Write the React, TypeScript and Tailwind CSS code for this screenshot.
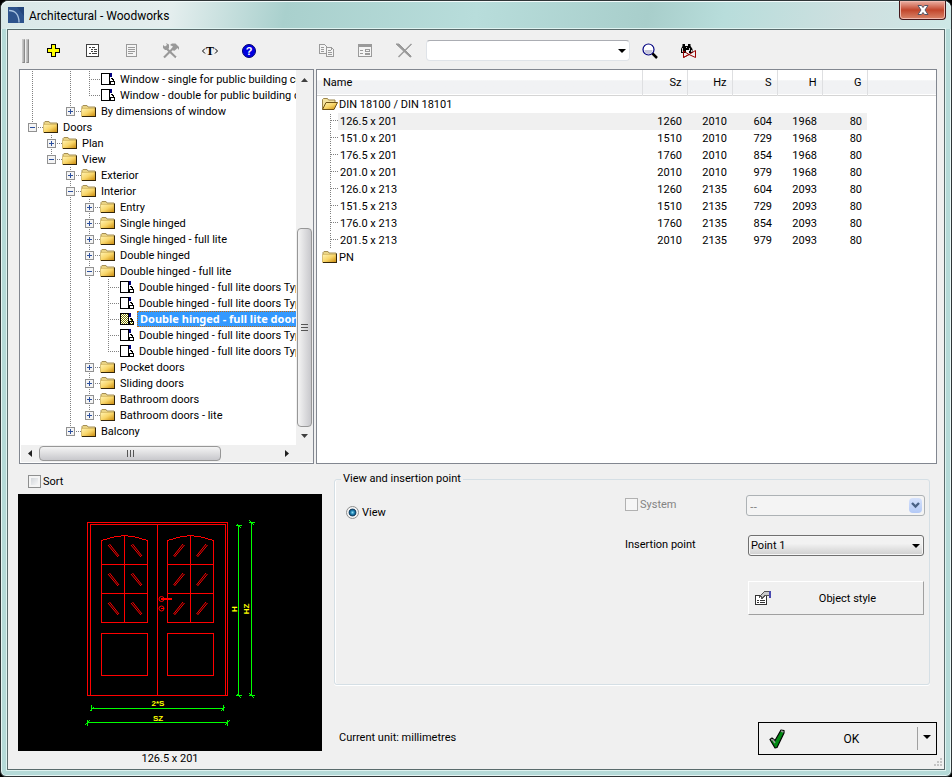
import React, { useState } from "react";

type TreeNode = {
  label: string;
  level: number;
  // columns to the left that carry a vertical guide
  guides?: number[];
  state?: "open" | "closed";
  up?: boolean;
  down?: boolean;
};

const TREE: TreeNode[] = [
  { label: "Window - single for public building co", level: 3, guides: [0, 2], up: true, down: true },
  { label: "Window - double for public building c", level: 3, guides: [0, 2], up: true },
  { label: "By dimensions of window", level: 2, guides: [0], state: "closed", up: true },
  { label: "Doors", level: 0, state: "open", up: true },
  { label: "Plan", level: 1, state: "closed", up: true, down: true },
  { label: "View", level: 1, state: "open", up: true },
  { label: "Exterior", level: 2, state: "closed", up: true, down: true },
  { label: "Interior", level: 2, state: "open", up: true, down: true },
  { label: "Entry", level: 3, guides: [2], state: "closed", up: true, down: true },
  { label: "Single hinged", level: 3, guides: [2], state: "closed", up: true, down: true },
  { label: "Single hinged - full lite", level: 3, guides: [2], state: "closed", up: true, down: true },
  { label: "Double hinged", level: 3, guides: [2], state: "closed", up: true, down: true },
  { label: "Double hinged - full lite", level: 3, guides: [2], state: "open", up: true, down: true },
  { label: "Double hinged - full lite doors Typ", level: 4, guides: [2, 3], up: true, down: true },
  { label: "Double hinged - full lite doors Typ", level: 4, guides: [2, 3], up: true, down: true },
  { label: "Double hinged - full lite door", level: 4, guides: [2, 3], up: true, down: true },
  { label: "Double hinged - full lite doors Typ", level: 4, guides: [2, 3], up: true, down: true },
  { label: "Double hinged - full lite doors Typ", level: 4, guides: [2, 3], up: true },
  { label: "Pocket doors", level: 3, guides: [2], state: "closed", up: true, down: true },
  { label: "Sliding doors", level: 3, guides: [2], state: "closed", up: true, down: true },
  { label: "Bathroom doors", level: 3, guides: [2], state: "closed", up: true, down: true },
  { label: "Bathroom doors - lite", level: 3, guides: [2], state: "closed", up: true },
  { label: "Balcony", level: 2, state: "closed", up: true },
];

const SIZES = [
  ["126.5 x 201", "1260", "2010", "604", "1968", "80"],
  ["151.0 x 201", "1510", "2010", "729", "1968", "80"],
  ["176.5 x 201", "1760", "2010", "854", "1968", "80"],
  ["201.0 x 201", "2010", "2010", "979", "1968", "80"],
  ["126.0 x 213", "1260", "2135", "604", "2093", "80"],
  ["151.5 x 213", "1510", "2135", "729", "2093", "80"],
  ["176.0 x 213", "1760", "2135", "854", "2093", "80"],
  ["201.5 x 213", "2010", "2135", "979", "2093", "80"],
];

const COLUMNS = ["Sz", "Hz", "S", "H", "G"];

/* ICONS */

const FolderIcon = () => (
  <svg width="16" height="14" viewBox="0 0 16 14" className="shrink-0">
    <defs>
      <linearGradient id="folder" x1="0" y1="0" x2="1" y2="1">
        <stop offset="0" stopColor="#fff3b4" />
        <stop offset="0.5" stopColor="#f8d568" />
        <stop offset="1" stopColor="#c88708" />
      </linearGradient>
    </defs>
    <path d="M1 12V2.500L2 1.500h4l1 1.500h7v9z" fill="#e9d385" stroke="#a58f55" />
    <path d="M.5 4.500h13.500v8H.5z" fill="url(#folder)" stroke="#c9a74a" strokeWidth=".5" />
    <path d="M14.500 3.500v9.500M1 12.500h14" stroke="#33250a" fill="none" />
  </svg>
);

const OpenFolderIcon = () => (
  <svg width="16" height="14" viewBox="0 0 16 14" className="shrink-0">
    <path d="M.5 12V2.500l1-1h4l1 1.500h6.500v2" fill="#f4e3a0" stroke="#9b844a" />
    <path d="M.5 12.500 4 5.500h11.500l-3.500 7z" fill="url(#folder)" stroke="#6f5214" />
  </svg>
);

const DrawingIcon = ({ active }: { active: boolean }) => (
  <svg width="16" height="14" viewBox="0 0 16 14" shapeRendering="crispEdges" className="shrink-0">
    <defs>
      <pattern id="dither" width="2" height="2" patternUnits="userSpaceOnUse">
        <path d="M0 0h1v1H0zM1 1h1v1H1z" fill="#808000" />
      </pattern>
    </defs>
    <path d="M1.500 1.500h8v11h-8z" fill={active ? "url(#dither)" : "#fff"} stroke="#000" />
    <path d="M10 1h2v4h-2z" fill="#000080" />
    <path d="M10.500 6.500h1.500v1h1v2h1v3h-4v-3h3" fill={active ? "url(#dither)" : "#fff"} stroke="#000" />
  </svg>
);

const Guides = ({ node }: { node: TreeNode }) => {
  const { level, guides = [], state, up, down } = node;
  const x = level * 19 + 9.5;
  return (
    <svg width={level * 19 + 20} height="16" shapeRendering="crispEdges" className="shrink-0">
      <g stroke="#808080" strokeDasharray="1 1" fill="none">
        {guides.map((g) => (
          <path key={g} d={`M${g * 19 + 9.5} 0v16`} />
        ))}
        {up && <path d={`M${x} 0v8`} />}
        {down && <path d={`M${x} 8v8`} />}
        <path d={`M${x - 0.5} 8.500h12`} />
      </g>
      {state && (
        <g>
          <rect x={x - 4} y="4.500" width="8" height="8" fill="#f4f4f4" stroke="#919191" />
          <path d={`M${x - 2.5} 8.500h5`} stroke="#2b4f9e" />
          {state === "closed" && <path d={`M${x} 6v5`} stroke="#2b4f9e" />}
        </g>
      )}
    </svg>
  );
};

const Caret = ({ className = "" }: { className?: string }) => (
  <svg width="8" height="4" viewBox="0 0 8 4" className={className}>
    <path d="M0 0h8L4 4z" fill="#000" />
  </svg>
);

const PlusIcon = () => (
  <svg width="14" height="14" viewBox="0 0 14 14" shapeRendering="crispEdges">
    <path d="M4.500.5h4v4h4v4h-4v4h-4v-4h-4v-4h4z" fill="#ff0" stroke="#000" />
  </svg>
);

const TreeListIcon = () => (
  <svg width="14" height="14" viewBox="0 0 14 14" shapeRendering="crispEdges">
    <path d="M.5.5h12v12H.5z" fill="#fff" stroke="#404040" />
    <path d="M3 3.500h2M6 3.500h3M5 5.500h2M8 5.500h3M5 7.500h2M8 7.500h3M3 9.500h2M6 9.500h5" stroke="#404040" />
  </svg>
);

const ListIcon = () => (
  <svg width="14" height="14" viewBox="0 0 14 14" shapeRendering="crispEdges">
    <path d="M1.500.5h10v12h-10z" fill="#f4f4f4" stroke="#9a9a9a" />
    <path d="M3 3.500h7M3 5.500h7M3 7.500h7M3 9.500h5" stroke="#9a9a9a" />
  </svg>
);

const ToolsIcon = () => (
  <svg width="18" height="16" viewBox="0 0 18 16">
    <path d="M6 7 15 15" stroke="#fff" strokeWidth="2" />
    <path d="M2 14.500 11 5.500" stroke="#999" strokeWidth="2.200" />
    <path d="M4.500 5.500 14 14.500" stroke="#999" strokeWidth="2.200" />
    <path d="M1 2l2 1.500L5 2 4 0l3 1.500V5L5.500 7H3L1 5z" fill="#999" />
    <path d="M8 2 10 .5h3.500L17 4v3l-1.500-2L14 6.500l-2 1.500-2.500-2.500L11 3.500z" fill="#999" />
  </svg>
);

const TextIcon = () => (
  <svg width="18" height="14" viewBox="0 0 18 14">
    <path d="M4 4.500 1.500 7 4 9.500M14 4.500 16.500 7 14 9.500" fill="none" stroke="#000" />
    <text x="9" y="11" textAnchor="middle" fontSize="12" fontWeight="700" fontFamily="Liberation Serif, serif">
      T
    </text>
  </svg>
);

const HelpIcon = () => (
  <svg width="14" height="14" viewBox="0 0 14 14">
    <circle cx="7" cy="7" r="6.500" fill="#0000e0" stroke="#000070" />
    <text x="7" y="11" textAnchor="middle" fontSize="11" fontWeight="700" fill="#fff" fontFamily="Liberation Sans, sans-serif">
      ?
    </text>
  </svg>
);

const CopyIcon = () => (
  <svg width="16" height="14" viewBox="0 0 16 14" shapeRendering="crispEdges">
    <path d="M.5.5h5l2 2v7h-7z" fill="#f4f4f4" stroke="#9a9a9a" />
    <path d="M2 3.500h3M2 5.500h3M2 7.500h3" stroke="#9a9a9a" />
    <path d="M7.500 3.500h5l2 2v7h-7z" fill="#f4f4f4" stroke="#9a9a9a" />
    <path d="M9 6.500h3M9 8.500h4M9 10.500h4M12.500 4v2" stroke="#9a9a9a" />
  </svg>
);

const FormIcon = () => (
  <svg width="15" height="14" viewBox="0 0 15 14" shapeRendering="crispEdges">
    <path d="M.5.5h13v12H.5z" fill="#f4f4f4" stroke="#9a9a9a" />
    <path d="M1 2h13" stroke="#9a9a9a" strokeWidth="2" />
    <path d="M2 6.500h3M2 9.500h3M7.500 5.500h4v2h-4zM7.500 9.500h4v1h-4z" fill="none" stroke="#9a9a9a" />
  </svg>
);

const DeleteIcon = () => (
  <svg width="17" height="16" viewBox="0 0 17 16">
    <path d="M2 3 15 15M16 2 3 14" stroke="#fff" />
    <path d="M15.500 1 2.500 14" stroke="#999" strokeWidth="1.500" />
    <path d="M0 1h3l12 12v1h-1z" fill="#999" stroke="#999" strokeWidth="1" />
  </svg>
);

const SearchIcon = () => (
  <svg width="16" height="16" viewBox="0 0 16 16">
    <circle cx="6.500" cy="6.500" r="5.500" fill="#fff" stroke="#000080" strokeWidth="1.200" />
    <path d="M2.500 7h8a4 4 0 0 1-8 0z" fill="#c6c6dc" />
    <path d="M10.500 10.500 15 15" stroke="#000" strokeWidth="2.500" />
  </svg>
);

const BinocularsIcon = () => (
  <svg width="17" height="16" viewBox="0 0 17 16">
    <path d="M2.500 1h2.500v2h3V1h2.500v2l2 3v4H9V7H6v3H1V6l1.500-3z" fill="#000" />
    <path d="M2.500 5v4M9.500 5v3M6.500 4v1M11.500 7v2" stroke="#fff" strokeWidth=".8" />
    <path d="M3.500 8v6.500l5.500-3 6.500 3V7.500L9 11.500l-5.500 3M3.500 8 9 11.500" fill="none" stroke="#900" />
  </svg>
);

const StyleIcon = () => (
  <svg width="17" height="15" viewBox="0 0 17 15" shapeRendering="crispEdges">
    <path d="M.5 4.500h11v9H.5z" fill="#fff" stroke="#333" />
    <path d="M2 9.500h2M5 9.500h5M2 11.500h2M5 11.500h5" stroke="#333" fill="none" />
    <path d="M3.500 6.500l6-6H14v4h-4l-3 3-1-2-2 1.500" fill="#c8c8c8" stroke="#555" />
    <path d="M14 0h2v7h-2z" fill="#4a4ab0" />
  </svg>
);

const CheckIcon = () => (
  <svg width="17" height="20" viewBox="0 0 17 20">
    <path d="M1 10.500 3 9l3 2.500L12 1l3 .5V4L8 18.500l-2 .5z" fill="#008a12" stroke="#000" strokeWidth="1.200" strokeLinejoin="round" />
    <path d="M2 10.500l2 .5 2 3M12 2l2.500 1" fill="none" stroke="#9a9a9a" strokeWidth="1.500" />
  </svg>
);

const AppIcon = () => (
  <svg width="16" height="16" viewBox="0 0 16 16" className="shrink-0">
    <path d="M0 0h16v16H0z" fill="#24467c" />
    <path d="M0 0h9l7 9v7H0z" fill="#36609c" opacity=".5" />
    <path d="M1 3.500c6 0 10 4 10 12" fill="none" stroke="#a9c3e0" strokeWidth="1.300" />
  </svg>
);

/* DOOR PREVIEW */

const PANES = [22, 51, 80];

const DoorPreview = () => (
  <svg viewBox="0 0 304 257" className="block w-full bg-black" role="img" aria-label="Door elevation">
    <g transform="translate(69 28)" fill="none" shapeRendering="crispEdges">
      <g stroke="#f00">
        <path d="M.5 173.500V.5h140v173z" />
        <path d="M3.500 173V2.500h135V173M70.500 3v170" />
        {[14, 80].map((x) => (
          <g key={x} transform={`translate(${x} 0)`}>
            <path d="M.5 100.500v-82q11-4 23-5q12 1 23 5v82zM23.500 14v86M.5 42.500h46M.5 71.500h46" />
            <path d="M.5 111.500h46v42h-46z" />
          </g>
        ))}
        {PANES.map((y) => (
          <g key={y} shapeRendering="auto">
            <path d={`M21 ${y + 1}l10 12M22.500 ${y}l9.500 12M44 ${y + 1}l10 12M45.500 ${y}l9.500 12`} />
            <path d={`M97.500 ${y + 1}l-10 12M96 ${y}l-9.500 12M120.500 ${y + 1}l-10 12M119 ${y}l-9.500 12`} />
          </g>
        ))}
        <g shapeRendering="auto">
          <circle cx="74.500" cy="77" r="2.500" />
          <path d="M74 77h11" strokeWidth="2" />
          <circle cx="74.500" cy="86.500" r="2.500" />
          <path d="M74 86.500h3" />
        </g>
      </g>
      <g stroke="#0f0">
        <path d="M151.500 3v171M149 3.500h6M149 173.500h6M150 2l4 4M150 172l4 4" />
        <path d="M164.500 0v174M162 .5h6M162 173.500h6M162-2l5 5M162 171l5 5" />
        <path d="M4 186.500h133M4.500 183v6M136.500 183v6M3 189l4-4M134 189l4-4" />
        <path d="M0 200.500h141M.5 198v6M140.500 198v6M-2 203l5-5M138 203l5-5" />
      </g>
    </g>
    <g fill="#ff0" fontFamily="Liberation Sans, sans-serif" fontSize="8" fontWeight="700" textAnchor="middle">
      <text x="140" y="212">2*S</text>
      <text x="140" y="227">SZ</text>
      <text transform="translate(219 115) rotate(-90)">H</text>
      <text transform="translate(231 115) rotate(-90)">HZ</text>
    </g>
  </svg>
);

const ToolButton = ({ label, children, disabled }: { label: string; children: React.ReactNode; disabled?: boolean }) => (
  <button aria-label={label} disabled={disabled} className="flex h-8 w-[39px] shrink-0 items-center justify-center">
    {children}
  </button>
);

/* TREE PANE */

const TreePane = ({ selected, onSelect }: { selected: number; onSelect: (i: number) => void }) => (
  <div className="flex w-[295px] shrink-0 flex-col border border-[#828790] bg-white pb-px">
    <div className="flex min-h-0 flex-1">
      <ul className="min-w-0 flex-1 overflow-hidden pt-px pl-[3px]">
        {TREE.map((node, i) => (
          <li key={i} className="flex h-4 items-center whitespace-nowrap" onClick={() => onSelect(i)}>
            <Guides node={node} />
            {node.state ? <FolderIcon /> : <DrawingIcon active={i === selected} />}
            <span
              className={
                i === selected
                  ? "ml-0.5 flex h-4 flex-1 items-center border border-dotted border-[#c06a10] bg-[#3399ff] pl-0.5 font-['Noto_Sans',sans-serif] font-bold text-white"
                  : "ml-1 pt-0.5"
              }
            >
              {node.label}
            </span>
          </li>
        ))}
      </ul>
      <div className="flex w-[17px] shrink-0 flex-col items-center bg-[#f0f0f0]">
        <svg width="7" height="4" viewBox="0 0 7 4" className="my-2">
          <path d="M0 4h7L3.500 0z" fill="#404040" />
        </svg>
        <div className="grow" />
        <div className="flex h-[199px] w-[15px] flex-col items-center justify-center gap-0.5 rounded-sm border border-[#979797] bg-linear-to-r from-[#f4f4f4] to-[#c8c8cc]">
          <div className="h-px w-[7px] bg-[#555]" />
          <div className="h-px w-[7px] bg-[#555]" />
          <div className="h-px w-[7px] bg-[#555]" />
        </div>
        <svg width="7" height="4" viewBox="0 0 7 4" className="my-[7px]">
          <path d="M0 0h7L3.500 4z" fill="#404040" />
        </svg>
      </div>
    </div>
    <div className="ml-px flex h-[17px] items-center bg-[#f0f0f0] pr-[17px]">
      <svg width="4" height="7" viewBox="0 0 4 7" className="mx-[7px]">
        <path d="M4 0v7L0 3.500z" fill="#202020" />
      </svg>
      <div className="flex h-[15px] w-[182px] items-center justify-center gap-0.5 rounded-sm border border-[#979797] bg-linear-to-b from-[#f4f4f4] to-[#c8c8cc]">
        <div className="h-[7px] w-px bg-[#555]" />
        <div className="h-[7px] w-px bg-[#555]" />
        <div className="h-[7px] w-px bg-[#555]" />
      </div>
      <div className="grow" />
      <svg width="4" height="7" viewBox="0 0 4 7" className="mx-[7px]">
        <path d="M0 0v7l4-3.500z" fill="#202020" />
      </svg>
    </div>
  </div>
);

/* SIZE TABLE */

const SizePane = ({ selected, onSelect }: { selected: number; onSelect: (i: number) => void }) => (
  <div className="min-w-0 flex-1 border border-[#828790] bg-white">
    <table className="w-full table-fixed border-collapse">
      <colgroup>
        <col />
        {COLUMNS.map((c) => (
          <col key={c} className="w-[45px]" />
        ))}
        <col className="w-[69px]" />
      </colgroup>
      <thead>
        <tr className="h-[25px] border-b border-[#d5d5d5] bg-linear-to-b from-white from-40% to-[#f1f2f4] to-45%">
          <th className="border-r border-[#dedfe1] p-0 pt-0.5 pl-1.5 text-left font-normal">Name</th>
          {COLUMNS.map((c) => (
            <th key={c} className="border-r border-[#dedfe1] p-0 pt-0.5 pr-[5px] text-right font-normal">
              {c}
            </th>
          ))}
          <th />
        </tr>
      </thead>
      <tbody>
        <tr className="h-[17px]">
          <td colSpan={7} className="p-0 pl-[5px]">
            <div className="flex h-[17px] items-center gap-px">
              <OpenFolderIcon />
              <span className="pt-px">DIN 18100 / DIN 18101</span>
            </div>
          </td>
        </tr>
        {SIZES.map(([name, ...values], i) => (
          <tr key={name} className="h-[17px]" onClick={() => onSelect(i)}>
            <td className="p-0 pl-3">
              <div className="flex h-[17px] items-center">
                <svg width="9" height="17" shapeRendering="crispEdges" className="shrink-0">
                  <path d="M1.500 1v16M2 7.500h7" stroke="#808080" strokeDasharray="1 1" />
                </svg>
                <span className={`flex h-[17px] flex-1 items-center pt-px pl-0.5 ${i === selected ? "bg-[#f0f0f0]" : ""}`}>
                  {name}
                </span>
              </div>
            </td>
            {values.map((v, j) => (
              <td key={j} className={`p-0 pt-px pr-[5px] text-right ${i === selected ? "bg-[#f0f0f0]" : ""}`}>
                {v}
              </td>
            ))}
            <td />
          </tr>
        ))}
        <tr className="h-[17px]">
          <td colSpan={7} className="p-0 pl-[5px]">
            <div className="flex h-[17px] items-center gap-px">
              <FolderIcon />
              <span className="pt-px">PN</span>
            </div>
          </td>
        </tr>
      </tbody>
    </table>
  </div>
);

const App = () => {
  const [treeRow, setTreeRow] = useState(15);
  const [sizeRow, setSizeRow] = useState(0);

  return (
    <div className="bg-black">
      <div className="flex min-h-screen flex-col rounded-t-lg rounded-b-md border border-[#2f3537] bg-[#b5dad8] font-['Roboto',sans-serif] text-[11px] leading-4 text-black shadow-[inset_0_0_0_1px_#e6f5f4]">
        {/* TITLE BAR */}
        <header className="flex h-7 shrink-0 items-start rounded-t-lg bg-[linear-gradient(100deg,#d9e8e8_0%,#e4eeee_18%,#a9d0cd_30%,#b8dddb_50%,#a8cecb_68%,#b8dddb_76%,#cfe0e0_90%,#cde8e6_100%)] pl-[7px] shadow-[inset_0_1px_0_#f2fafa]">
          <div className="flex grow items-center gap-[5px] pt-[5px] text-xs">
            <AppIcon />
            <h1 className="pt-0.5">Architectural - Woodworks</h1>
          </div>
          <button
            aria-label="Close"
            className="mr-[5px] flex h-[19px] w-[47px] items-center justify-center rounded-b-[4px] border border-t-0 border-[#43171a] bg-linear-to-b from-[#eab0a4] via-[#c1452b] via-50% to-[#d9856a] shadow-[inset_0_0_0_1px_#f0b9ae]"
          >
            <svg width="12" height="10" viewBox="0 0 12 10">
              <path d="M1 .5h3.500L6 2.500 7.500.5H11L8 5l3 4.500H7.500L6 7.500l-1.500 2H1L4 5z" fill="#fff" stroke="#535666" />
            </svg>
          </button>
        </header>

        <main className="mx-1.5 mb-1.5 flex flex-1 flex-col border border-[#5a6b6c] bg-[#f0f0f0] shadow-[0_0_0_1px_#dff3f1]">
          {/* TOOLBAR */}
          <div className="flex h-[39px] shrink-0 items-center pt-0.5 pl-3.5">
            <div className="mr-[5px] flex gap-px">
              <div className="h-6 w-[3px] border border-t-[#c8c8c8] border-r-[#8a8a8a] border-b-[#8a8a8a] border-l-[#c8c8c8] bg-[#b4b4b4]" />
              <div className="h-6 w-[3px] border border-t-[#c8c8c8] border-r-[#8a8a8a] border-b-[#8a8a8a] border-l-[#c8c8c8] bg-[#b4b4b4]" />
            </div>
            <ToolButton label="Add"><PlusIcon /></ToolButton>
            <ToolButton label="Tree view"><TreeListIcon /></ToolButton>
            <ToolButton label="List view" disabled><ListIcon /></ToolButton>
            <ToolButton label="Tools" disabled><ToolsIcon /></ToolButton>
            <ToolButton label="Text"><TextIcon /></ToolButton>
            <ToolButton label="Help"><HelpIcon /></ToolButton>
            <div className="w-[39px] shrink-0" />
            <ToolButton label="Copy" disabled><CopyIcon /></ToolButton>
            <ToolButton label="Properties" disabled><FormIcon /></ToolButton>
            <ToolButton label="Delete" disabled><DeleteIcon /></ToolButton>
            <div className="relative ml-0.5 w-[204px]">
              <select
                aria-label="Search text"
                className="block h-[21px] w-full appearance-none rounded-sm border border-[#dfe3e8] border-t-[#abadb3] bg-white px-1"
              >
                <option></option>
              </select>
              <Caret className="pointer-events-none absolute top-[9px] right-1" />
            </div>
            <ToolButton label="Search"><SearchIcon /></ToolButton>
            <ToolButton label="Find in drawing"><BinocularsIcon /></ToolButton>
          </div>

          {/* BROWSER */}
          <div className="flex flex-1 gap-0.5 pr-[7px] pl-[11px]">
            <TreePane selected={treeRow} onSelect={setTreeRow} />
            <SizePane selected={sizeRow} onSelect={setSizeRow} />
          </div>

          <div className="flex shrink-0 gap-3 pr-[7px] pl-2.5">
            {/* PREVIEW */}
            <div className="w-[304px] shrink-0">
              <label className="flex h-[30px] items-center gap-0.5 pt-1 pl-2.5">
                <input
                  type="checkbox"
                  className="size-[13px] appearance-none border border-[#8e8f8f] bg-linear-to-br from-[#c9cdd2] to-white shadow-[inset_0_0_0_2px_#f4f4f4] checked:bg-[#3399ff]"
                />
                <span className="pt-0.5">Sort</span>
              </label>
              <DoorPreview />
              <p className="pb-0.5 text-center">126.5 x 201</p>
            </div>

            {/* OPTIONS */}
            <div className="flex min-w-0 flex-1 flex-col pt-[7px]">
              <fieldset className="mr-[7px] flex justify-between rounded-[3px] border border-[#d5dfe5] pt-2 pr-1 pb-[69px] pl-[11px] shadow-[inset_1px_0_0_#fff,0_1px_0_#fff]">
                <legend className="ml-[-5px] px-0.5">View and insertion point</legend>
                <label className="flex h-[34px] items-center gap-[3px]">
                  <input
                    type="radio"
                    name="view"
                    defaultChecked
                    className="size-[13px] appearance-none rounded-full border border-[#8e8f8f] bg-[radial-gradient(circle_at_50%_50%,#8fdcf5_0,#1c80b0_25%,#123a5c_45%,#f4f4f4_55%)]"
                  />
                  <span className="pt-0.5">View</span>
                </label>
                <div className="grid grid-cols-[121px_179px] items-start">
                  <label className="flex items-center gap-0.5 text-[#838383]">
                    <input type="checkbox" disabled className="size-[13px] appearance-none border border-[#b1b1b1] bg-[#f6f6f6]" />
                    <span className="pt-0.5">System</span>
                  </label>
                  <div className="relative">
                    <select
                      aria-label="System"
                      disabled
                      className="block h-[21px] w-full appearance-none rounded-[3px] border border-[#adb2b5] bg-[#f4f4f4] px-[3px] font-['Noto_Sans',sans-serif] text-[#838383] opacity-100"
                    >
                      <option>--</option>
                    </select>
                    <span className="pointer-events-none absolute top-[3px] right-[3px] flex h-[15px] w-[13px] items-center justify-center rounded-sm bg-linear-to-b from-[#d6e2fc] to-[#b3c9f6]">
                      <svg width="9" height="7" viewBox="0 0 9 7">
                        <path d="M1 1l3.500 3.500L8 1" fill="none" stroke="#4a6185" strokeWidth="2.400" />
                      </svg>
                    </span>
                  </div>
                  <label htmlFor="insertion" className="mt-[21px]">Insertion point</label>
                  <div className="relative mt-[19px] mr-px ml-0.5">
                    <select
                      id="insertion"
                      className="block h-[21px] w-full appearance-none rounded-[3px] border border-[#707070] bg-linear-to-b from-[#f2f2f2] from-40% to-[#cfcfcf] px-0.5 pt-px shadow-[inset_0_0_0_1px_#f6f6f6]"
                    >
                      <option>Point 1</option>
                      <option>Point 2</option>
                    </select>
                    <Caret className="pointer-events-none absolute top-[9px] right-1" />
                  </div>
                  <button className="col-start-2 mt-[25px] mr-px ml-0.5 flex h-[34px] items-center border border-t-white border-r-[#a0a0a0] border-b-[#a0a0a0] border-l-white pl-1.5">
                    <StyleIcon />
                    <span className="flex-1 pt-0.5 text-center">Object style</span>
                  </button>
                </div>
              </fieldset>
              <div className="flex items-center justify-between pt-[37px] pl-[5px]">
                <p className="pb-0.5">Current unit: millimetres</p>
                <div className="flex h-[33px] w-[179px] border border-black">
                  <button className="flex flex-1 items-center pl-2.5">
                    <CheckIcon />
                    <span className="flex-1 text-center text-xs">OK</span>
                  </button>
                  <button aria-label="More options" className="my-1 flex w-[19px] items-center justify-center border-l border-[#a0a0a0] pb-1">
                    <Caret />
                  </button>
                </div>
              </div>
              <svg width="9" height="9" viewBox="0 0 9 9" shapeRendering="crispEdges" className="mt-[3px] mr-[-6px] self-end">
                <path d="M6 0h2v2H6zM3 3h2v2H3zM6 3h2v2H6zM0 6h2v2H0zM3 6h2v2H3zM6 6h2v2H6z" fill="#c4c4c4" />
              </svg>
            </div>
          </div>
        </main>
      </div>
    </div>
  );
};

export default App;
